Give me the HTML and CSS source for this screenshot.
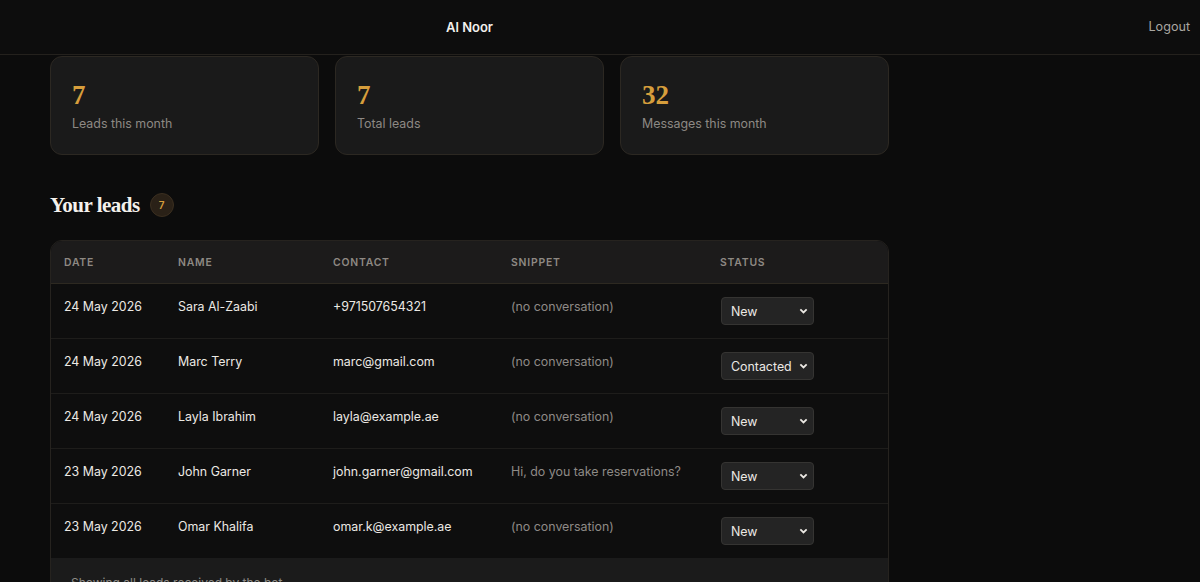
FILE: index.html
```html
<!DOCTYPE html>
<html>
<head>
	<title>Al Noor - Leads</title>
	<link rel="stylesheet" href="styles.css">
</head>
<body>
	<header class="topbar">
		<div class="brand">Al Noor</div>
		<a class="logout" href="#">Logout</a>
	</header>

	<main class="page">
		<section class="stats">
			<div class="stat">
				<div class="stat-num">7</div>
				<div class="stat-label">Leads this month</div>
			</div>
			<div class="stat">
				<div class="stat-num">7</div>
				<div class="stat-label">Total leads</div>
			</div>
			<div class="stat">
				<div class="stat-num">32</div>
				<div class="stat-label">Messages this month</div>
			</div>
		</section>

		<h2 class="section-title">Your leads <span class="count">7</span></h2>

		<div class="table-wrap">
			<table class="leads">
				<thead>
					<tr>
						<th class="c-date">Date</th>
						<th class="c-name">Name</th>
						<th class="c-contact">Contact</th>
						<th class="c-snip">Snippet</th>
						<th>Status</th>
					</tr>
				</thead>
				<tbody>
					<tr>
						<td>24 May 2026</td>
						<td>Sara Al-Zaabi</td>
						<td>+971507654321</td>
						<td class="snip">(no conversation)</td>
						<td><span class="select-box"><select class="status"><option selected>New</option><option>Contacted</option><option>Closed</option></select><svg class="chev" viewBox="0 0 10 6"><path d="M1.5 1.2 5 4.6 8.5 1.2"/></svg></span></td>
					</tr>
					<tr>
						<td>24 May 2026</td>
						<td>Marc Terry</td>
						<td>marc@gmail.com</td>
						<td class="snip">(no conversation)</td>
						<td><span class="select-box"><select class="status"><option>New</option><option selected>Contacted</option><option>Closed</option></select><svg class="chev" viewBox="0 0 10 6"><path d="M1.5 1.2 5 4.6 8.5 1.2"/></svg></span></td>
					</tr>
					<tr>
						<td>24 May 2026</td>
						<td>Layla Ibrahim</td>
						<td>layla@example.ae</td>
						<td class="snip">(no conversation)</td>
						<td><span class="select-box"><select class="status"><option selected>New</option><option>Contacted</option><option>Closed</option></select><svg class="chev" viewBox="0 0 10 6"><path d="M1.5 1.2 5 4.6 8.5 1.2"/></svg></span></td>
					</tr>
					<tr>
						<td>23 May 2026</td>
						<td>John Garner</td>
						<td>john.garner@gmail.com</td>
						<td class="snip">Hi, do you take reservations?</td>
						<td><span class="select-box"><select class="status"><option selected>New</option><option>Contacted</option><option>Closed</option></select><svg class="chev" viewBox="0 0 10 6"><path d="M1.5 1.2 5 4.6 8.5 1.2"/></svg></span></td>
					</tr>
					<tr>
						<td>23 May 2026</td>
						<td>Omar Khalifa</td>
						<td>omar.k@example.ae</td>
						<td class="snip">(no conversation)</td>
						<td><span class="select-box"><select class="status"><option selected>New</option><option>Contacted</option><option>Closed</option></select><svg class="chev" viewBox="0 0 10 6"><path d="M1.5 1.2 5 4.6 8.5 1.2"/></svg></span></td>
					</tr>
				</tbody>
			</table>
			<div class="table-foot">Showing all leads received by the bot</div>
		</div>
	</main>
</body>
</html>
```

FILE: styles.css
```css
body {
	margin: 0;
	background-color: #0c0c0c;
	color: #e9e6e1;
	font-family: "Inter", "Open Sans", sans-serif;
	font-size: 12.4px;
}
.topbar {
	display: flex;
	align-items: center;
	height: 53px;
	padding-bottom: 1px;
	border-bottom: 1px solid #24211d;
	background-color: #0d0d0d;
}
.brand {
	width: 839px;
	margin-left: 50px;
	text-align: center;
	font-weight: 600;
	font-size: 13px;
	color: #f2f0ec;
}
.logout {
	margin-left: auto;
	margin-right: 10px;
	color: #a9a6a1;
	text-decoration: none;
	font-size: 12.6px;
}
.page {
	width: 839px;
	margin-left: 50px;
	padding-top: 1px;
}
.stats {
	display: grid;
	grid-template-columns: repeat(3, 1fr);
	gap: 16px;
}
.stat {
	height: 99px;
	box-sizing: border-box;
	padding: 23px 21px 0;
	background-color: #1a1a1a;
	border: 1px solid #2c2822;
	border-radius: 12px;
}
.stat-num {
	font-family: "Liberation Serif", serif;
	font-weight: bold;
	font-size: 27px;
	line-height: 30px;
	color: #d69e3c;
}
.stat-label {
	margin-top: 6px;
	color: #8d8984;
	font-size: 12.4px;
}
.section-title {
	display: flex;
	align-items: center;
	gap: 10px;
	margin: 36px 0 21px;
	font-family: "Liberation Serif", serif;
	font-weight: bold;
	font-size: 21px;
	line-height: 28px;
	color: #f4f1ec;
	letter-spacing: -0.5px;
}
.count {
	display: inline-flex;
	align-items: center;
	justify-content: center;
	width: 24px;
	height: 24px;
	box-sizing: border-box;
	border-radius: 50%;
	background-color: #2a2117;
	border: 1px solid #3b2f20;
	font-family: "Inter", sans-serif;
	font-size: 10px;
	font-weight: 600;
	color: #d69e3c;
	letter-spacing: 0;
}
.table-wrap {
	border: 1px solid #26231f;
	border-radius: 12px;
	overflow: hidden;
	background-color: #1b1b1b;
}
.leads {
	width: 100%;
	border-collapse: collapse;
	background-color: #0e0e0e;
}
.leads th {
	height: 42px;
	padding: 0 0 0 13px;
	text-align: left;
	background-color: #1c1b1b;
	color: #8e8983;
	font-size: 10.4px;
	font-weight: 600;
	letter-spacing: 0.8px;
	text-transform: uppercase;
	border-bottom: 1px solid #2d2921;
}
.c-date { width: 101px; }
.c-name { width: 142px; }
.c-contact { width: 165px; }
.c-snip { width: 196px; }
.leads td {
	height: 39px;
	padding: 15px 0 0 13px;
	border-bottom: 1px solid #1e1d1b;
	color: #ece9e4;
	vertical-align: top;
	line-height: 15px;
}
.leads td.snip {
	color: #8e8b87;
}
.leads tbody tr:last-child td {
	border-bottom: none;
}
.select-box {
	position: relative;
	display: inline-block;
	margin-top: -2px;
	margin-left: 1px;
}
.status {
	appearance: none;
	width: 93px;
	height: 28px;
	padding: 0 18px 0 9px;
	background-color: #242424;
	color: #ece9e4;
	border: 1px solid #353432;
	border-radius: 4px;
	font-family: "Inter", sans-serif;
	font-size: 12.4px;
}
.chev {
	position: absolute;
	right: 6px;
	top: 11px;
	width: 9px;
	height: 6px;
	fill: none;
	stroke: #ece9e4;
	stroke-width: 2;
	pointer-events: none;
}
.table-foot {
	padding: 17px 20px 30px;
	color: #8e8b87;
	font-size: 12px;
}
```
